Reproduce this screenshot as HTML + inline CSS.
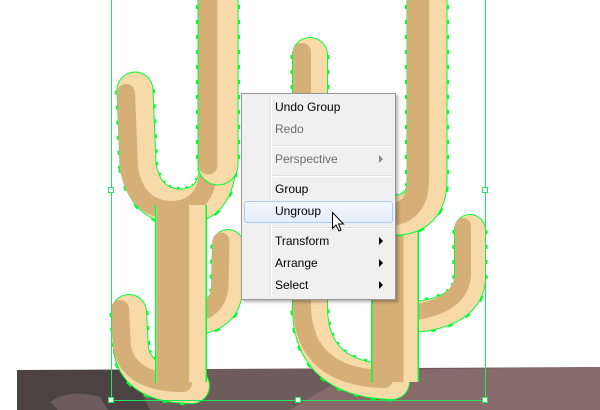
<!DOCTYPE html>
<html><head><style>
html,body{margin:0;padding:0;width:600px;height:410px;overflow:hidden;background:#fff;font-family:"Liberation Sans",sans-serif}
svg{position:absolute;left:0;top:0}
.menu{position:absolute;left:241px;top:93px;width:153px;height:205px;background:#f0f0f0;border:1px solid #979797;box-shadow:2px 2px 3px rgba(0,0,0,.3)}
.gut{position:absolute;left:28px;top:2px;bottom:2px;width:1px;background:#e2e3e3;border-right:1px solid #fff}
.it{position:absolute;left:33px;font-size:12px;color:#000;line-height:14px}
.dis{color:#6d6d6d}
.sep{position:absolute;left:31px;right:3px;height:1px;background:#e0e0e0;border-bottom:1px solid #fff}
.hl{position:absolute;left:2px;top:107px;width:147px;height:20px;border:1px solid #a8cbf0;border-radius:3px;background:linear-gradient(#f2f7fd,#e3eefb)}
.ar{position:absolute;right:12px;width:0;height:0;border-left:4px solid #000;border-top:4px solid transparent;border-bottom:4px solid transparent}
</style></head><body>
<svg width="600" height="410" viewBox="0 0 600 410">
<defs>
<path id="lc" d="M218 -10 L218 165"/>
<path id="lu" d="M135 90 L138 165 Q145 207 182 207 Q218 205 218 160"/>
<path id="lt" d="M181 205 L181 382"/>
<path id="lr" d="M228 245 L227 290 Q225 318 190 320"/>
<path id="ll" d="M129 312 L131 350 Q138 386 192 386"/>
<path id="rc" d="M427 -10 L427 180 Q427 213 398 215"/>
<path id="rt" d="M395 215 L395 382"/>
<path id="rl" d="M310 55 L310 310 Q312 380 392 382"/>
<path id="rr" d="M470 230 L470 280 Q466 316 400 318"/>
</defs>
<!-- ground -->
<path d="M17 370 L600 367 L600 410 L17 410 Z" fill="#6e5c5c"/>
<path d="M17 370 L130 370 L150 410 L17 410 Z" fill="#4c4143"/>
<path d="M360 370 L600 367 L600 410 L290 410 Q330 385 360 370Z" fill="#866b6a"/>
<path d="M50 402 Q70 388 100 397 L108 410 L58 410Z" fill="#6e5c5c"/>
<g fill="none" stroke-linecap="round" stroke-linejoin="round">
<!-- left cactus -->
<use href="#lu" stroke="#00ff33" stroke-width="40" stroke-dasharray="4 11" stroke-linecap="butt"/><use href="#lu" stroke="#00ff33" stroke-width="37"/><use href="#lu" stroke="#f8d9a8" stroke-width="35"/><use href="#lu" stroke="#d6ae78" stroke-width="18" transform="translate(-9,3)"/>
<use href="#lr" stroke="#00ff33" stroke-width="35" stroke-dasharray="4 11" stroke-linecap="butt"/><use href="#lr" stroke="#00ff33" stroke-width="32"/><use href="#lr" stroke="#f8d9a8" stroke-width="30"/><use href="#lr" stroke="#d6ae78" stroke-width="17" transform="translate(-7,-4)"/>
<use href="#ll" stroke="#00ff33" stroke-width="39" stroke-dasharray="4 11" stroke-linecap="butt"/><use href="#ll" stroke="#00ff33" stroke-width="36"/><use href="#ll" stroke="#f8d9a8" stroke-width="34"/><use href="#ll" stroke="#d6ae78" stroke-width="18" transform="translate(-9,-3)"/>
<use href="#lt" stroke="#00ff33" stroke-width="52" stroke-linecap="butt"/><use href="#lt" stroke="#f8d9a8" stroke-width="49" stroke-linecap="butt"/><use href="#lt" stroke="#d6ae78" stroke-width="32" transform="translate(-8,0)" stroke-linecap="butt"/>
<use href="#lc" stroke="#00ff33" stroke-width="44" stroke-dasharray="4 11" stroke-linecap="butt"/><use href="#lc" stroke="#00ff33" stroke-width="41"/><use href="#lc" stroke="#f8d9a8" stroke-width="39"/><use href="#lc" stroke="#d6ae78" stroke-width="19" transform="translate(-10,0)"/>
<!-- right cactus -->
<use href="#rl" stroke="#00ff33" stroke-width="39" stroke-dasharray="4 11" stroke-linecap="butt"/><use href="#rl" stroke="#00ff33" stroke-width="36"/><use href="#rl" stroke="#f8d9a8" stroke-width="34"/><use href="#rl" stroke="#d6ae78" stroke-width="18" transform="translate(-8,-3)"/>
<use href="#rr" stroke="#00ff33" stroke-width="35" stroke-dasharray="4 11" stroke-linecap="butt"/><use href="#rr" stroke="#00ff33" stroke-width="32"/><use href="#rr" stroke="#f8d9a8" stroke-width="30"/><use href="#rr" stroke="#d6ae78" stroke-width="16" transform="translate(-7,-4)"/>
<use href="#rt" stroke="#00ff33" stroke-width="48" stroke-linecap="butt"/><use href="#rt" stroke="#f8d9a8" stroke-width="45" stroke-linecap="butt"/><use href="#rt" stroke="#d6ae78" stroke-width="31" transform="translate(-7,0)" stroke-linecap="butt"/>
<use href="#rc" stroke="#00ff33" stroke-width="44" stroke-dasharray="4 11" stroke-linecap="butt"/><use href="#rc" stroke="#00ff33" stroke-width="41"/><use href="#rc" stroke="#f8d9a8" stroke-width="39"/><use href="#rc" stroke="#d6ae78" stroke-width="22" transform="translate(-9,0)"/>
</g>
<!-- selection box -->
<g stroke="#22e65c" stroke-width="1" fill="none">
<path d="M111.5 0 V400.5 H485.5 V0"/>
</g>
<g fill="#fff" stroke="#22e65c">
<rect x="108.5" y="187.5" width="5" height="5"/><rect x="482.5" y="187.5" width="5" height="5"/>
<rect x="108.5" y="397.5" width="5" height="5"/><rect x="295.5" y="397.5" width="5" height="5"/><rect x="482.5" y="397.5" width="5" height="5"/>
</g>
</svg>
<div class="menu">
<div class="gut"></div>
<div class="hl"></div>
<div class="it" style="top:6px">Undo Group</div>
<div class="it dis" style="top:28px">Redo</div>
<div class="sep" style="top:51px"></div>
<div class="it dis" style="top:58px">Perspective</div>
<div class="ar" style="top:61px;border-left-color:#888"></div>
<div class="sep" style="top:81px"></div>
<div class="it" style="top:88px">Group</div>
<div class="it" style="top:110px">Ungroup</div>
<div class="sep" style="top:133px"></div>
<div class="it" style="top:140px">Transform</div>
<div class="ar" style="top:143px"></div>
<div class="it" style="top:162px">Arrange</div>
<div class="ar" style="top:165px"></div>
<div class="it" style="top:184px">Select</div>
<div class="ar" style="top:187px"></div>
</div>
<svg width="600" height="410" style="pointer-events:none">
<path d="M332.5 212.5 L332.5 228.5 L336 225 L339 231 L341 230 L338.5 224 L343.5 224 Z" fill="#fff" stroke="#000" stroke-width="1"/>
</svg>
</body></html>
